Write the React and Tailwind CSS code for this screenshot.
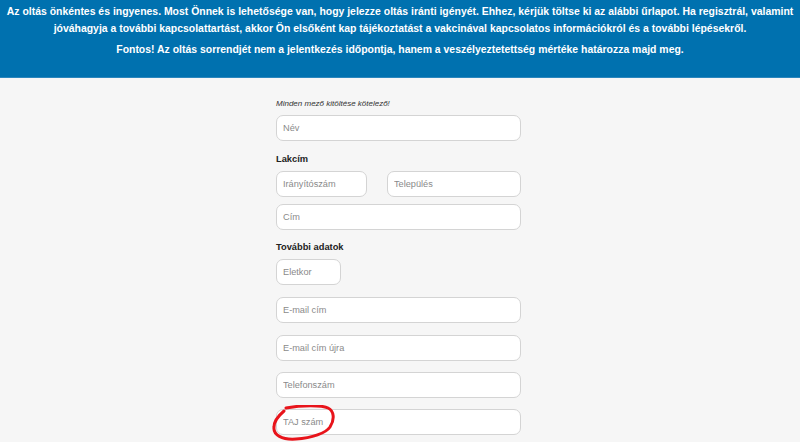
export default function App() {
  const inputCls =
    "block h-[26px] rounded-[7px] border border-[#d4d4d4] bg-white px-[6px] text-[9.2px] text-[#888] placeholder:text-[#8a8a8a] outline-none";
  return (
    <div className="min-h-[442px] bg-[#f6f6f6]" style={{ fontFamily: '"Liberation Sans", Arial, sans-serif' }}>
      <div className="bg-[#0071af] border-b border-[#2b86bd] pt-[3px] pb-[19px] text-center text-[10.45px] font-bold leading-[17px] text-white">
        <p>
          Az oltás önkéntes és ingyenes. Most Önnek is lehetősége van, hogy jelezze oltás iránti igényét. Ehhez, kérjük töltse ki az alábbi űrlapot. Ha regisztrál, valamint jóváhagyja a további kapcsolattartást, akkor Ön elsőként kap tájékoztatást a vakcinával kapcsolatos információkról és a további lépésekről.
        </p>
        <p className="mt-[4px]">
          Fontos! Az oltás sorrendjét nem a jelentkezés időpontja, hanem a veszélyeztetettség mértéke határozza majd meg.
        </p>
      </div>
      <div className="mx-auto w-[248px] pt-[21px]">
        <p className="text-[8px] italic leading-[10px] text-[#333]">Minden mező kitöltése kötelező!</p>
        <input className={`${inputCls} mt-[6px] w-[245px]`} placeholder="Név" />
        <p className="mt-[12px] text-[9.3px] font-bold leading-[12px] text-[#222]">Lakcím</p>
        <div className="mt-[6px] flex gap-[20px]">
          <input className={`${inputCls} w-[91px]`} placeholder="Irányítószám" />
          <input className={`${inputCls} w-[134px]`} placeholder="Település" />
        </div>
        <input className={`${inputCls} mt-[7px] w-[245px]`} placeholder="Cím" />
        <p className="mt-[11px] text-[9.3px] font-bold leading-[12px] text-[#222]">További adatok</p>
        <input className={`${inputCls} mt-[6px] w-[65px]`} placeholder="Eletkor" />
        <input className={`${inputCls} mt-[12px] w-[245px]`} placeholder="E-mail cím" />
        <input className={`${inputCls} mt-[12px] w-[245px]`} placeholder="E-mail cím újra" />
        <input className={`${inputCls} mt-[11px] w-[245px]`} placeholder="Telefonszám" />
        <div className="relative mt-[11px]">
          <input className={`${inputCls} w-[245px]`} placeholder="TAJ szám" />
          <svg className="absolute left-[-4px] top-[-4px]" width="66" height="37" viewBox="0 0 66 37" fill="none">
            <path
              d="M14 3 C30 0 50 0 56 3 C62 6 63 14 58 22 C54 28 40 33 24 34 C10 35 1 30 2 22 C2 17 5 12 12 6"
              stroke="#e8141b"
              strokeWidth="3"
              strokeLinecap="round"
            />
          </svg>
        </div>
      </div>
    </div>
  );
}
